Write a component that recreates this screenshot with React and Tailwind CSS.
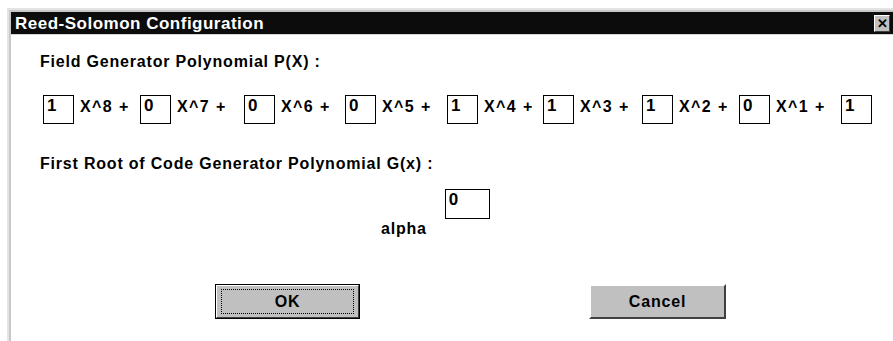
const terms = [
  { v: '1', t: 'X^8 +', w: 'w-[97px]' },
  { v: '0', t: 'X^7 +', w: 'w-[104px]' },
  { v: '0', t: 'X^6 +', w: 'w-[101px]' },
  { v: '0', t: 'X^5 +', w: 'w-[102px]' },
  { v: '1', t: 'X^4 +', w: 'w-[96px]' },
  { v: '1', t: 'X^3 +', w: 'w-[99px]' },
  { v: '1', t: 'X^2 +', w: 'w-[97px]' },
  { v: '0', t: 'X^1 +', w: 'w-[102px]' },
];

function Box({ value, className = '' }) {
  return (
    <div className={`border border-black bg-white pl-[3px] pt-[1px] text-[17px] font-bold leading-none ${className}`}>
      {value}
    </div>
  );
}

export default function App() {
  return (
    <div className="min-h-screen w-full bg-white pl-[7px] pt-[8px] font-['Liberation_Sans',Arial,sans-serif] text-black">
      <div className="h-[333px] border-l-2 border-t-2 border-[#e4e4e4]">
        <div className="h-full border-l-2 border-t-2 border-[#c8c8c8]">
          {/* title bar */}
          <div className="flex h-[23px] items-center justify-between border-b border-[#d6d6d6] bg-[#0c0c0c] pl-[4px] pr-[3px]">
            <span className="text-[17px] font-bold leading-none tracking-[0.5px] text-white">Reed-Solomon Configuration</span>
            <div className="flex h-[17px] w-[16px] items-center justify-center border border-b-[#404040] border-l-white border-r-[#404040] border-t-white bg-[#c0c0c0] text-[13px] font-bold leading-none text-black">
              ✕
            </div>
          </div>

          <div className="pl-[29px] pt-[18px]">
            <div className="text-[16px] font-bold leading-[17px] tracking-[0.8px]">Field Generator Polynomial P(X) :</div>

            <div className="ml-[3px] mt-[25px] flex items-start">
              {terms.map((term, i) => (
                <div key={i} className={`flex items-start ${term.w}`}>
                  <Box value={term.v} className="h-[29px] w-[31px]" />
                  <span className="ml-[6px] mt-[4px] text-[16px] font-bold leading-none tracking-[1.4px]">{term.t}</span>
                </div>
              ))}
              <Box value="1" className="h-[29px] w-[31px]" />
            </div>

            <div className="mt-[31px] text-[16px] font-bold leading-[17px] tracking-[0.8px]">First Root of Code Generator Polynomial G(x) :</div>

            <div className="mt-[17px] flex items-start">
              <span className="ml-[341px] mt-[32px] text-[16px] font-bold leading-none tracking-[0.8px]">alpha</span>
              <Box value="0" className="ml-[18px] h-[30px] w-[45px]" />
            </div>

            <div className="mt-[47px] flex">
              <div className="ml-[175px] border border-black">
                <div className="flex h-[33px] w-[143px] items-center justify-center border border-b-[#404040] border-l-white border-r-[#404040] border-t-white bg-[#c0c0c0]">
                  <div className="flex h-[25px] w-[133px] items-center justify-center border border-dotted border-black text-[16px] font-bold tracking-[0.8px]">
                    OK
                  </div>
                </div>
              </div>
              <div className="ml-[229px] flex h-[35px] w-[137px] items-center justify-center border-2 border-b-[#404040] border-l-white border-r-[#404040] border-t-white bg-[#c0c0c0] text-[16px] font-bold tracking-[0.8px]">
                Cancel
              </div>
            </div>
          </div>
        </div>
      </div>
    </div>
  );
}
